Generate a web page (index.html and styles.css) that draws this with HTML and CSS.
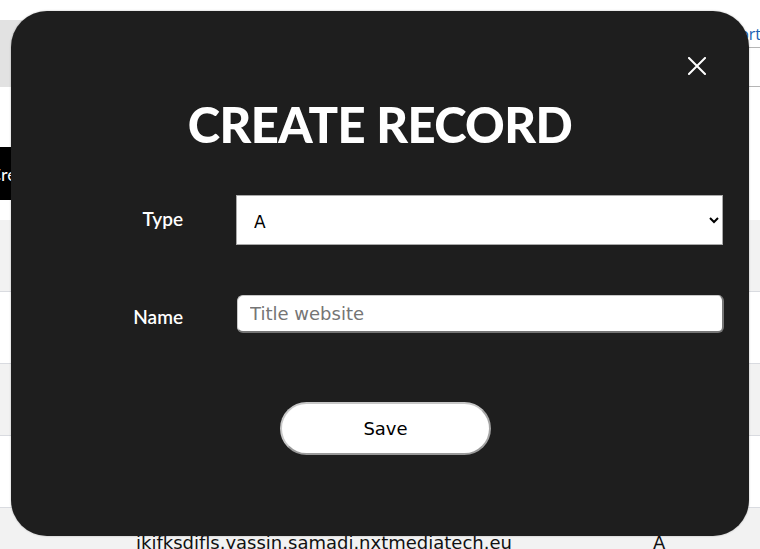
FILE: index.html
```html
<!DOCTYPE html>
<html>
<head>
<meta charset="utf-8">
<link rel="stylesheet" href="styles.css">
</head>
<body>
<div class="page">
  <header class="topbar">
    <div class="topbar-main"></div>
    <nav class="topbar-nav"><a class="nav-link">Export</a></nav>
  </header>
  <div class="actions">
    <button class="create-btn">Create</button>
  </div>
  <div class="table">
    <div class="row alt"></div>
    <div class="row"></div>
    <div class="row alt"></div>
    <div class="row"></div>
    <div class="row alt last">
      <span class="cell-name">ikifksdifls.yassin.samadi.nxtmediatech.eu</span>
      <span class="cell-type">A</span>
    </div>
  </div>
</div>

<div class="modal">
  <div class="modal-head">
    <button class="close-btn" aria-label="Close">
      <svg width="18" height="18" viewBox="0 0 18 18"><path d="M1 1 L17 17 M17 1 L1 17" stroke="#fff" stroke-width="2" stroke-linecap="square" fill="none"/></svg>
    </button>
  </div>
  <h1 class="modal-title">CREATE RECORD</h1>
  <form class="form">
    <label class="form-label label-type">Type</label>
    <select class="form-select">
      <option>A</option>
    </select>
    <label class="form-label label-name">Name</label>
    <input class="form-input" type="text" placeholder="Title website">
  </form>
  <div class="form-actions">
    <button class="save-btn">Save</button>
  </div>
</div>
</body>
</html>
```
FILE: styles.css
```css
* { box-sizing: border-box; }
html, body { margin: 0; padding: 0; }
body {
  width: 760px;
  height: 549px;
  overflow: hidden;
  background: #fff;
  font-family: "DejaVu Sans", sans-serif;
  position: relative;
}
.page { padding-top: 20px; }
.topbar {
  display: flex;
  height: 67px;
}
.topbar-main { flex: 1; background: #e2e2e2; }
.topbar-nav {
  width: 120px;
  border-bottom: 1px solid #b5b5b5;
}
.nav-link {
  display: block;
  text-align: right;
  color: #1a5fb4;
  font-family: "Open Sans", sans-serif;
  font-size: 16px;
  line-height: 26px;
  padding-top: 1px;
  border-bottom: 1px solid #b5b5b5;
  margin-right: -1px;
}
.actions { padding-top: 60px; height: 133px; }
.create-btn {
  margin-left: -31px;
  height: 53px;
  width: 160px;
  background: #000;
  color: #fff;
  border: 0;
  font-family: "Lato", sans-serif;
  font-weight: 400;
  font-size: 18px;
  text-align: left;
  padding: 0 0 0 20px;
  display: block;
}
.table { display: flex; flex-direction: column; }
.row {
  height: 72px;
  border-bottom: 1px solid #d9dbe0;
  background: #fff;
  display: flex;
  align-items: flex-end;
}
.row.alt { background: #f2f2f2; }
.row.last { border-bottom: 0; height: 60px; align-items: flex-start; padding-top: 24px; }
.cell-name {
  margin-left: 136px;
  font-size: 18px;
  color: #111;
  width: 517px;
}
.cell-type { font-size: 18px; color: #111; }

.modal {
  position: absolute;
  left: 11px;
  top: 11px;
  width: 738px;
  height: 525px;
  background: #1e1e1e;
  border-radius: 36px;
  box-shadow: 0 0 2px rgba(0,0,0,0.3);
  color: #fff;
}
.modal-head {
  display: flex;
  justify-content: flex-end;
  padding: 46px 43px 0 0;
  height: 86px;
}
.close-btn {
  background: none;
  border: 0;
  padding: 0;
  width: 18px;
  height: 18px;
  display: flex;
}
.modal-title {
  margin: 0;
  text-align: center;
  font-family: "Lato", sans-serif;
  font-weight: 900;
  font-size: 49px;
  line-height: 54px;
  letter-spacing: -0.6px;
  color: #fff;
  height: 98px;
}
.form {
  display: grid;
  grid-template-columns: 172px 1fr;
  column-gap: 53px;
  row-gap: 50px;
  padding-right: 26px;
  align-items: center;
}
.form-label {
  text-align: right;
  font-family: "Lato", sans-serif;
  font-weight: 600;
  font-size: 19px;
  color: #fff;
}
.label-type { margin-top: -4px; }
.label-name { margin-top: 4px; }
.form-select {
  height: 50px;
  width: 100%;
  border: 1px solid #a9a9a9;
  border-radius: 0;
  background: #fff;
  font-family: "DejaVu Sans", sans-serif;
  font-size: 17px;
  color: #000;
  padding-left: 13px;
  padding-top: 3px;
}
.form-input {
  height: 38px;
  width: 100%;
  margin-left: 1px;
  border: 2px solid #767676;
  border-top-color: #c8c8c8;
  border-left-color: #c8c8c8;
  border-top-width: 1px;
  border-left-width: 1px;
  border-radius: 6px;
  font-family: "DejaVu Sans", sans-serif;
  font-size: 18px;
  padding: 0 12px;
  background: #fff;
}
.form-input::placeholder { color: #757575; }
.form-actions {
  display: flex;
  justify-content: center;
  padding: 69px 0 0 11px;
}
.save-btn {
  width: 211px;
  height: 53px;
  border-radius: 27px;
  background: #fff;
  border: 2px solid #c7c7c7;
  border-bottom-color: #9a9a9a;
  border-right-color: #a5a5a5;
  font-family: "DejaVu Sans", sans-serif;
  font-size: 18px;
  color: #000;
}
```
